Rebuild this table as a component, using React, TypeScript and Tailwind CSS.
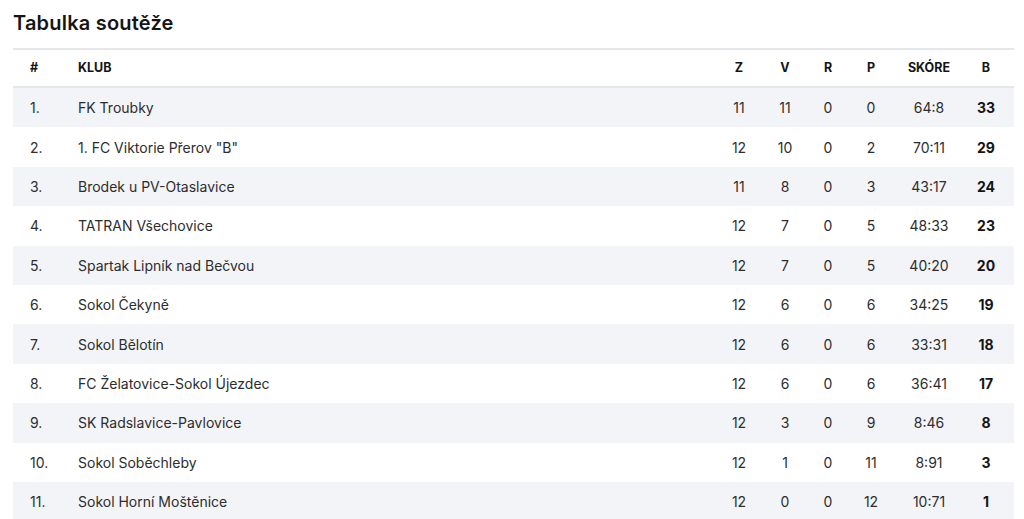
const rows: [string, string, number, number, number, number, string, number][] = [
  ["1.", "FK Troubky", 11, 11, 0, 0, "64:8", 33],
  ["2.", '1. FC Viktorie Přerov "B"', 12, 10, 0, 2, "70:11", 29],
  ["3.", "Brodek u PV-Otaslavice", 11, 8, 0, 3, "43:17", 24],
  ["4.", "TATRAN Všechovice", 12, 7, 0, 5, "48:33", 23],
  ["5.", "Spartak Lipník nad Bečvou", 12, 7, 0, 5, "40:20", 20],
  ["6.", "Sokol Čekyně", 12, 6, 0, 6, "34:25", 19],
  ["7.", "Sokol Bělotín", 12, 6, 0, 6, "33:31", 18],
  ["8.", "FC Želatovice-Sokol Újezdec", 12, 6, 0, 6, "36:41", 17],
  ["9.", "SK Radslavice-Pavlovice", 12, 3, 0, 9, "8:46", 8],
  ["10.", "Sokol Soběchleby", 12, 1, 0, 11, "8:91", 3],
  ["11.", "Sokol Horní Moštěnice", 12, 0, 0, 12, "10:71", 1],
];

const grid = "grid grid-cols-[65px_1fr_46px_46px_40px_46px_70px_44px] pr-[6px] items-center";

export default function App() {
  return (
    <div className="min-h-[519px] bg-white pl-[13px] pr-[10px] font-['Inter',sans-serif]">
      <h1 className="pt-[8px] h-[48px] text-[20px] font-semibold tracking-[0.2px] text-[#151515]">
        Tabulka soutěže
      </h1>
      <div className="border-t-2 border-[#e6e7ea]">
        <div className={`${grid} h-[38px] border-b-2 border-[#e6e7ea] text-[12.5px] font-bold text-[#151515]`}>
          <span className="pl-[17px]">#</span>
          <span>KLUB</span>
          <span className="text-center">Z</span>
          <span className="text-center">V</span>
          <span className="text-center">R</span>
          <span className="text-center">P</span>
          <span className="text-center">SKÓRE</span>
          <span className="text-center">B</span>
        </div>
        {rows.map((r, i) => (
          <div
            key={r[0]}
            className={`${grid} h-[39.4px] text-[14px] text-[#2d2d2d] ${i % 2 === 0 ? "bg-[#f3f4f7]" : "bg-white"}`}
          >
            <span className="pl-[17px]">{r[0]}</span>
            <span>{r[1]}</span>
            <span className="text-center">{r[2]}</span>
            <span className="text-center">{r[3]}</span>
            <span className="text-center">{r[4]}</span>
            <span className="text-center">{r[5]}</span>
            <span className="text-center">{r[6]}</span>
            <span className="text-center font-bold text-[#151515]">{r[7]}</span>
          </div>
        ))}
      </div>
    </div>
  );
}
